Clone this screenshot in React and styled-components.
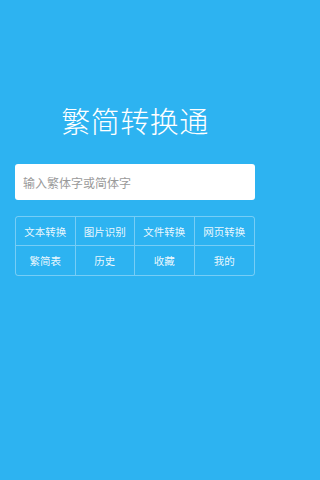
import React from "react"
import styled, { createGlobalStyle } from "styled-components"

const GlobalStyle = createGlobalStyle`
  html, body {
    margin: 0;
    padding: 0;
    background: #2db3f1;
  }
  * {
    box-sizing: border-box;
  }
`

const Screen = styled.div`
  width: 270px;
  height: 480px;
  background: #2db3f1;
  display: flex;
  flex-direction: column;
  padding: 102px 15px 0 15px;
  font-family: "Noto Sans CJK SC", "Noto Sans", sans-serif;
`

const Title = styled.h1`
  margin: 0;
  height: 36px;
  line-height: 36px;
  font-size: 29px;
  font-weight: 300;
  color: #fff;
  text-align: center;
  letter-spacing: 0.5px;
`

const SearchInput = styled.input`
  margin-top: 26px;
  width: 100%;
  height: 36px;
  border: none;
  outline: none;
  border-radius: 3px;
  background: #fff;
  padding: 0 8px;
  font-family: inherit;
  font-size: 12px;
  color: #333;

  &::placeholder {
    color: #9a9a9a;
  }
`

const MenuGrid = styled.div`
  margin-top: 16px;
  display: grid;
  grid-template-columns: repeat(4, 1fr);
  border: 1px solid rgba(255, 255, 255, 0.35);
  border-radius: 3px;
`

const MenuItem = styled.div`
  height: 29px;
  display: flex;
  align-items: center;
  justify-content: center;
  font-size: 10.5px;
  color: rgba(255, 255, 255, 0.92);
  border-right: ${(p) => (p.$last ? "none" : "1px solid rgba(255, 255, 255, 0.35)")};
  border-bottom: ${(p) => (p.$bottom ? "none" : "1px solid rgba(255, 255, 255, 0.35)")};
`

const items = [
  "文本转换",
  "图片识别",
  "文件转换",
  "网页转换",
  "繁简表",
  "历史",
  "收藏",
  "我的",
]

export default function App() {
  return (
    <>
      <GlobalStyle />
      <Screen>
        <Title>繁简转换通</Title>
        <SearchInput placeholder="输入繁体字或简体字" />
        <MenuGrid>
          {items.map((label, i) => (
            <MenuItem key={label} $last={i % 4 === 3} $bottom={i >= 4}>
              {label}
            </MenuItem>
          ))}
        </MenuGrid>
      </Screen>
    </>
  )
}
